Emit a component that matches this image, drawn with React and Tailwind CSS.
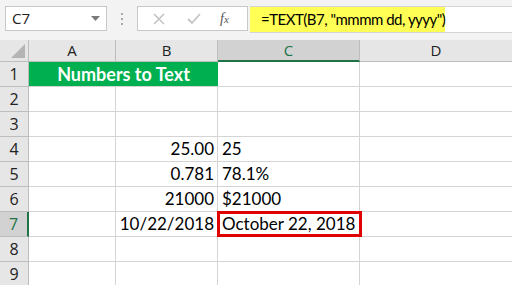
import React from 'react';

const rows = [
  { n: 1 },
  { n: 2 },
  { n: 3 },
  { n: 4, b: '25.00', c: '25' },
  { n: 5, b: '0.781', c: '78.1%' },
  { n: 6, b: '21000', c: '$21000' },
  { n: 7, b: '10/22/2018', c: 'October 22, 2018' },
  { n: 8 },
  { n: 9 },
];

const cellFont = { fontFamily: 'Lato, "Liberation Sans", sans-serif' };
const uiFont = { fontFamily: '"Open Sans", "Noto Sans", sans-serif' };

export default function App() {
  return (
    <div className="w-[512px] h-[285px] overflow-hidden bg-white" style={uiFont}>
      {/* Formula bar */}
      <div className="h-[40px] bg-[#f3f3f3] flex items-start pt-[6px]">
        <div className="ml-[5px] w-[102px] h-[25px] shrink-0 bg-white border border-[#c8c8c8] flex items-center justify-between pl-[6px] pr-[6px] text-[15px] text-[#222]">
          <span>C7</span>
          <svg width="9" height="6" viewBox="0 0 9 6">
            <path d="M0 0 H9 L4.5 5 Z" fill="#7a7a7a" />
          </svg>
        </div>
        <div className="w-[30px] h-[25px] shrink-0 flex flex-col items-center justify-center gap-[3px]">
          <span className="w-[2px] h-[2px] bg-[#a8a8a8]" />
          <span className="w-[2px] h-[2px] bg-[#a8a8a8]" />
          <span className="w-[2px] h-[2px] bg-[#a8a8a8]" />
        </div>
        <div className="w-[111px] h-[25px] shrink-0 bg-white border border-[#c8c8c8] flex items-center">
          <svg className="ml-[15px]" width="12" height="12" viewBox="0 0 12 12">
            <path d="M1 1 L11 11 M11 1 L1 11" stroke="#c4c4c4" strokeWidth="1.6" />
          </svg>
          <svg className="ml-[22px]" width="14" height="12" viewBox="0 0 14 12">
            <path d="M1 6 L5 10 L13 1" stroke="#c4c4c4" strokeWidth="1.8" fill="none" />
          </svg>
          <span className="ml-[19px] text-[14px] italic text-[#555]" style={{ fontFamily: '"Liberation Serif", serif' }}>
            f<span className="text-[11px]">x</span>
          </span>
        </div>
        <div className="flex-1 h-[27px] bg-white border-t border-b border-[#d4d4d4] ml-[2px] flex">
          <div
            className="w-[195px] h-full shrink-0 bg-[#ffff55] flex items-center pl-[11px] text-[15px] tracking-[-0.5px] text-black whitespace-nowrap"
            style={cellFont}
          >
            =TEXT(B7, "mmmm dd, yyyy")
          </div>
        </div>
      </div>

      {/* Sheet */}
      <div className="grid grid-cols-[29px_87px_102px_142px_1fr] grid-rows-[22px_repeat(9,25px)]">
        {/* header row */}
        <div className="bg-[#e6e6e6] border-r border-b border-[#bdbdbd] relative">
          <svg className="absolute right-[3px] bottom-[3px]" width="14" height="14" viewBox="0 0 14 14">
            <path d="M14 0 V14 H0 Z" fill="#b4b4b4" />
          </svg>
        </div>
        <div className="bg-[#e6e6e6] border-r border-b border-[#bdbdbd] flex items-center justify-center text-[15px] text-[#222]">A</div>
        <div className="bg-[#e6e6e6] border-r border-b border-[#bdbdbd] flex items-center justify-center text-[15px] text-[#222]">B</div>
        <div className="bg-[#d2d2d2] border-r border-[#bdbdbd] border-b-2 border-b-[#217346] flex items-center justify-center text-[15px] text-[#217346]">C</div>
        <div className="bg-[#e6e6e6] border-b border-[#bdbdbd] flex items-center justify-center text-[15px] text-[#222]">D</div>

        {rows.map((r) => {
          const sel = r.n === 7;
          return (
            <React.Fragment key={r.n}>
              <div
                className={
                  sel
                    ? 'bg-[#d2d2d2] border-b border-[#bdbdbd] border-r-2 border-r-[#217346] flex items-center justify-center text-[16px] text-[#217346]'
                    : 'bg-[#e6e6e6] border-r border-b border-[#bdbdbd] flex items-center justify-center text-[16px] text-[#222]'
                }
              >
                {r.n}
              </div>
              {r.n === 1 ? (
                <div
                  className="col-span-2 bg-[#00b050] border-b border-[#d4d4d4] flex items-center justify-center text-white font-bold text-[18px]"
                  style={cellFont}
                >
                  Numbers to Text
                </div>
              ) : (
                <>
                  <div className="border-r border-b border-[#d4d4d4]" />
                  <div
                    className="border-r border-b border-[#d4d4d4] flex items-center justify-end pr-[3px] text-[17px] text-black"
                    style={cellFont}
                  >
                    {r.b}
                  </div>
                </>
              )}
              <div
                className="relative border-r border-b border-[#d4d4d4] flex items-center pl-[4px] text-[17px] text-black whitespace-nowrap"
                style={cellFont}
              >
                {r.c}
                {sel && (
                  <div className="absolute top-[-1px] left-[-1px] right-[-3px] bottom-[-1px] border-[3px] border-[#e00000]" />
                )}
              </div>
              <div className="border-b border-[#d4d4d4]" />
            </React.Fragment>
          );
        })}
      </div>
    </div>
  );
}
